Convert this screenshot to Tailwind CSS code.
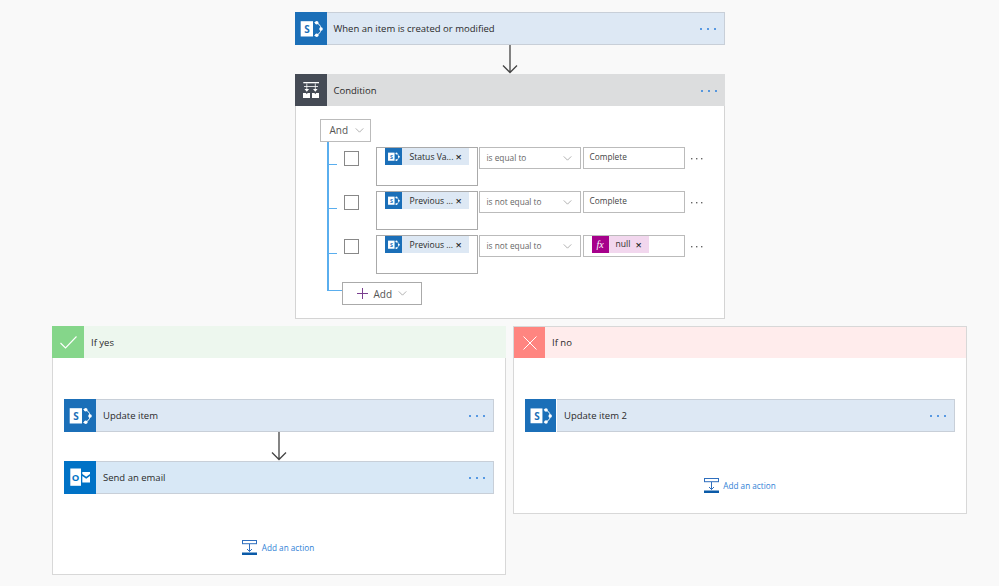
<!DOCTYPE html>
<html lang="en">
<head>
<meta charset="UTF-8">
<title>Flow designer</title>
<script src="https://cdn.jsdelivr.net/npm/@tailwindcss/browser@4"></script>
</head>
<body class="w-[999px] h-[586px] overflow-hidden bg-[#f9f9f9] text-[#2a2a2a] font-['Open_Sans','Noto_Sans',sans-serif] text-[9.5px] leading-none">

<!-- shared icons -->
<svg width="0" height="0" class="absolute">
  <symbol id="sp" viewBox="0 0 32 32">
    <path d="M19.5 10a6.5 6.5 0 0 1 0 13" fill="none" stroke="#fff" stroke-width="1"/>
    <circle cx="21.7" cy="10.2" r="1.8" fill="#fff"/>
    <circle cx="26" cy="16.5" r="1.8" fill="#fff"/>
    <circle cx="21.7" cy="22.8" r="1.8" fill="#fff"/>
    <rect x="5.7" y="8.7" width="12.3" height="15.3" fill="#fff"/>
  </symbol>
  <symbol id="outlook" viewBox="0 0 32 32">
    <rect x="6.3" y="7" width="10.7" height="17.3" fill="#fff"/>
    <path d="M18.3 10.5H26v2l-3.8 2.8-3.9-2.8zM18.3 14.6l3.9 2.7 3.8-2.7V21h-7.7z" fill="#fff"/>
  </symbol>
  <symbol id="add-action" viewBox="0 0 15 15">
    <rect x="0.5" y="0.5" width="14" height="3.2" fill="none" stroke="#2f6fbe"/>
    <path d="M7.5 4v7.5M5 9l2.5 2.5L10 9" fill="none" stroke="#2f6fbe"/>
    <rect x="0" y="12.5" width="15" height="2.5" fill="#0a5aa8"/>
  </symbol>
  <symbol id="chev" viewBox="0 0 10 6">
    <path d="M0.5 0.5L5 5l4.5-4.5" fill="none" stroke="#8a8a8a" stroke-width="0.8"/>
  </symbol>
  <symbol id="down-arrow" viewBox="0 0 16 29">
    <path d="M8 0v27.5M1 20.5l7 7 7-7" fill="none" stroke="#444" stroke-width="1.3"/>
  </symbol>
  <symbol id="dots" viewBox="0 0 16 2">
    <rect x="0" y="0" width="2" height="2" rx="1" fill="#2b7fdc"/>
    <rect x="7" y="0" width="2" height="2" rx="1" fill="#2b7fdc"/>
    <rect x="14" y="0" width="2" height="2" rx="1" fill="#2b7fdc"/>
  </symbol>
  <symbol id="dots-gray" viewBox="0 0 12 2">
    <rect x="0" y="0" width="1.4" height="1.4" fill="#666"/>
    <rect x="5" y="0" width="1.4" height="1.4" fill="#666"/>
    <rect x="10" y="0" width="1.4" height="1.4" fill="#666"/>
  </symbol>
</svg>

<div class="flex flex-col items-center pt-3 w-[1019px]">
  <!-- trigger -->
  <div class="w-[430px] h-[33px] flex items-center bg-[#dde8f4] border border-[#c8cfd8]">
    <div class="w-[32px] h-[33px] -ml-px shrink-0 bg-[#1b6fb8]">
      <svg class="w-[32px] h-[33px]" viewBox="0 0 32 33"><use href="#sp"/><text x="12" y="20.5" text-anchor="middle" font-weight="700" font-size="10" fill="#1b6fb8">S</text></svg>
    </div>
    <span class="ml-[7px] mt-px flex-1">When an item is created or modified</span>
    <svg class="w-[16px] h-[2px] mr-[8px] mt-px"><use href="#dots"/></svg>
  </div>
  <svg class="w-[16px] h-[29px] shrink-0"><use href="#down-arrow"/></svg>

  <!-- condition -->
  <div class="w-[430px] h-[245px] bg-white border border-[#d4d4d4] flex flex-col">
    <div class="h-[32px] -mx-px -mt-px flex items-center bg-[#dcddde] shrink-0">
      <div class="w-[32px] h-[32px] shrink-0 bg-[#454b55]">
        <svg class="w-[32px] h-[32px]" viewBox="0 0 32 32">
          <rect x="8.3" y="8" width="15.7" height="1.3" fill="#fff"/>
          <path d="M9 12.5h14M11.8 9.5v5.5M20.3 9.5v5.5" stroke="#fff" stroke-width="0.8" fill="none"/>
          <path d="M9.5 15h4.6l-2.3 2.7zM18 15h4.6l-2.3 2.7z" fill="#fff"/>
          <path d="M8 19h3l.8 1.2.8-1.2H15v5H8zM17 19h2.5l.8 1.2.8-1.2H24v5h-7z" fill="#fff"/>
        </svg>
      </div>
      <span class="ml-[7px] mt-px flex-1">Condition</span>
      <svg class="w-[16px] h-[2px] mr-[8px] mt-px"><use href="#dots"/></svg>
    </div>

    <div class="relative pl-[24px] pt-[13px]">
      <!-- tree connector -->
      <div class="absolute left-[31px] top-[36px] w-[15px] h-[149px] border-l-2 border-b border-[#5aaeee]"></div>
      <div class="absolute left-[32px] top-[58px] w-[9px] h-px bg-[#5aaeee]"></div>
      <div class="absolute left-[32px] top-[102px] w-[9px] h-px bg-[#5aaeee]"></div>
      <div class="absolute left-[32px] top-[147px] w-[9px] h-px bg-[#5aaeee]"></div>

      <div class="w-[51px] h-[23px] border border-[#bbb] flex items-center pl-[9px] pb-px gap-[7px] text-[10px] text-[#555]">
        And <svg class="w-[9px] h-[5px]"><use href="#chev"/></svg>
      </div>

      <div class="flex flex-col gap-[5px] mt-[5px] pl-[24px]">
        <div class="flex h-[39px]">
          <div class="w-[15px] h-[15px] mt-[4px] border border-[#888] shrink-0"></div>
          <div class="w-[102px] h-[39px] ml-[17px] border border-[#aaa] pl-[8px]">
            <div class="w-[84px] h-[17px] flex items-center bg-[#dde8f4]">
              <div class="w-[17px] h-[17px] bg-[#1b6fb8] shrink-0">
                <svg class="w-[17px] h-[17px]" viewBox="0 0 32 32"><use href="#sp"/><text x="12" y="20.5" text-anchor="middle" font-weight="700" font-size="10" fill="#1b6fb8">S</text></svg>
              </div>
              <span class="ml-[8px] mt-px w-[46px] text-[8.6px] whitespace-nowrap">Status Va...</span>
              <span class="text-[11px] font-semibold">×</span>
            </div>
          </div>
          <div class="w-[102px] h-[22px] ml-px border border-[#bbb] flex items-center justify-between pl-[7px] pr-[8px] text-[8.3px] text-[#666]">
            is equal to <svg class="w-[9px] h-[5px]"><use href="#chev"/></svg>
          </div>
          <div class="w-[102px] h-[22px] ml-[2px] border border-[#bbb] flex items-center pl-[6px] pb-[2px] text-[8.3px] text-[#444]">Complete</div>
          <svg class="w-[12px] h-[2px] ml-[6px] mt-[11px]"><use href="#dots-gray"/></svg>
        </div>

        <div class="flex h-[39px]">
          <div class="w-[15px] h-[15px] mt-[4px] border border-[#888] shrink-0"></div>
          <div class="w-[102px] h-[39px] ml-[17px] border border-[#aaa] pl-[8px]">
            <div class="w-[84px] h-[17px] flex items-center bg-[#dde8f4]">
              <div class="w-[17px] h-[17px] bg-[#1b6fb8] shrink-0">
                <svg class="w-[17px] h-[17px]" viewBox="0 0 32 32"><use href="#sp"/><text x="12" y="20.5" text-anchor="middle" font-weight="700" font-size="10" fill="#1b6fb8">S</text></svg>
              </div>
              <span class="ml-[8px] mt-px w-[46px] text-[8.6px] whitespace-nowrap">Previous ...</span>
              <span class="text-[11px] font-semibold">×</span>
            </div>
          </div>
          <div class="w-[102px] h-[22px] ml-px border border-[#bbb] flex items-center justify-between pl-[7px] pr-[8px] text-[8.3px] text-[#666]">
            is not equal to <svg class="w-[9px] h-[5px]"><use href="#chev"/></svg>
          </div>
          <div class="w-[102px] h-[22px] ml-[2px] border border-[#bbb] flex items-center pl-[6px] pb-[2px] text-[8.3px] text-[#444]">Complete</div>
          <svg class="w-[12px] h-[2px] ml-[6px] mt-[11px]"><use href="#dots-gray"/></svg>
        </div>

        <div class="flex h-[39px]">
          <div class="w-[15px] h-[15px] mt-[4px] border border-[#888] shrink-0"></div>
          <div class="w-[102px] h-[39px] ml-[17px] border border-[#aaa] pl-[8px]">
            <div class="w-[84px] h-[17px] flex items-center bg-[#dde8f4]">
              <div class="w-[17px] h-[17px] bg-[#1b6fb8] shrink-0">
                <svg class="w-[17px] h-[17px]" viewBox="0 0 32 32"><use href="#sp"/><text x="12" y="20.5" text-anchor="middle" font-weight="700" font-size="10" fill="#1b6fb8">S</text></svg>
              </div>
              <span class="ml-[8px] mt-px w-[46px] text-[8.6px] whitespace-nowrap">Previous ...</span>
              <span class="text-[11px] font-semibold">×</span>
            </div>
          </div>
          <div class="w-[102px] h-[22px] ml-px border border-[#bbb] flex items-center justify-between pl-[7px] pr-[8px] text-[8.3px] text-[#666]">
            is not equal to <svg class="w-[9px] h-[5px]"><use href="#chev"/></svg>
          </div>
          <div class="w-[102px] h-[22px] ml-[2px] border border-[#bbb] pl-[8px]">
            <div class="w-[57px] h-[17px] flex items-center bg-[#f2d7ee] text-[8.6px]">
              <div class="w-[17px] h-[17px] bg-[#a6008b] text-white flex items-center justify-center font-['Liberation_Serif',serif] italic text-[10px] shrink-0">fx</div>
              <span class="ml-[7px] w-[15px]">null</span>
              <span class="text-[11px] font-semibold ml-[5px]">×</span>
            </div>
          </div>
          <svg class="w-[12px] h-[2px] ml-[6px] mt-[11px]"><use href="#dots-gray"/></svg>
        </div>
      </div>

      <div class="w-[80px] h-[23px] ml-[22px] mt-[8px] relative bg-white border border-[#aaa] flex items-center pl-[14px] gap-[6px] text-[10px] text-[#555]">
        <svg class="w-[11px] h-[11px]" viewBox="0 0 11 11"><path d="M5.5 0v11M0 5.5h11" stroke="#7a3f8f" fill="none"/></svg>
        <span>Add</span>
        <svg class="w-[9px] h-[5px]"><use href="#chev"/></svg>
      </div>
    </div>
  </div>
</div>

<!-- branches -->
<div class="flex items-start gap-[7px] pl-[52px] mt-[7px]">
  <div class="w-[454px] h-[249px] bg-white border border-[#d8d8d8] shrink-0 flex flex-col">
    <div class="h-[32px] -mx-px -mt-px flex items-center bg-[#edf7ee] shrink-0">
      <div class="w-[32px] h-[32px] bg-[#85d68a] flex items-center justify-center">
        <svg class="w-[17px] h-[13px]" viewBox="0 0 17 13"><path d="M0.5 7l5 5L16.5 0.5" fill="none" stroke="#fff" stroke-width="1.1"/></svg>
      </div>
      <span class="ml-[7px] mt-px">If yes</span>
    </div>
    <div class="px-[11px] pt-[41px] flex flex-col items-center">
      <div class="w-[430px] h-[33px] flex items-center bg-[#dde8f4] border border-[#c8cfd8]">
        <div class="w-[32px] h-[33px] -ml-px shrink-0 bg-[#1b6fb8]">
          <svg class="w-[32px] h-[33px]" viewBox="0 0 32 33"><use href="#sp"/><text x="12" y="20.5" text-anchor="middle" font-weight="700" font-size="10" fill="#1b6fb8">S</text></svg>
        </div>
        <span class="ml-[7px] mt-px flex-1">Update item</span>
        <svg class="w-[16px] h-[2px] mr-[8px] mt-px"><use href="#dots"/></svg>
      </div>
      <svg class="w-[16px] h-[29px] shrink-0"><use href="#down-arrow"/></svg>
      <div class="w-[430px] h-[33px] flex items-center bg-[#d8e8f6] border border-[#c8cfd8]">
        <div class="w-[32px] h-[33px] -ml-px shrink-0 bg-[#0072c6]">
          <svg class="w-[32px] h-[33px]" viewBox="0 0 32 33"><use href="#outlook"/><text x="11.6" y="20" text-anchor="middle" font-weight="700" font-size="9.5" fill="#0072c6">O</text></svg>
        </div>
        <span class="ml-[7px] mt-px flex-1">Send an email</span>
        <svg class="w-[16px] h-[2px] mr-[8px] mt-px"><use href="#dots"/></svg>
      </div>
      <div class="flex items-center gap-[5px] mt-[46px] -ml-[2px] text-[8.2px] text-[#2f7fd6]">
        <svg class="w-[15px] h-[15px]"><use href="#add-action"/></svg>
        <span class="mt-px">Add an action</span>
      </div>
    </div>
  </div>

  <div class="w-[454px] h-[188px] bg-white border border-[#d8d8d8] shrink-0 flex flex-col">
    <div class="h-[31px] flex items-center bg-[#ffecec] shrink-0">
      <div class="w-[31px] h-[31px] bg-[#ff8580] flex items-center justify-center">
        <svg class="w-[14px] h-[14px]" viewBox="0 0 14 14"><path d="M0.5 0.5l13 13M13.5 0.5l-13 13" fill="none" stroke="#fff" stroke-width="1"/></svg>
      </div>
      <span class="ml-[7px] mt-px">If no</span>
    </div>
    <div class="px-[11px] pt-[41px] flex flex-col items-center">
      <div class="w-[430px] h-[33px] flex items-center bg-[#dde8f4] border border-[#c8cfd8]">
        <div class="w-[32px] h-[33px] -ml-px shrink-0 bg-[#1b6fb8] border-r border-white">
          <svg class="w-[31px] h-[33px]" viewBox="0 0 31 33"><use href="#sp"/><text x="12" y="20.5" text-anchor="middle" font-weight="700" font-size="10" fill="#1b6fb8">S</text></svg>
        </div>
        <span class="ml-[7px] mt-px flex-1">Update item 2</span>
        <svg class="w-[16px] h-[2px] mr-[8px] mt-px"><use href="#dots"/></svg>
      </div>
      <div class="flex items-center gap-[4px] mt-[46px] text-[8.2px] text-[#2f7fd6]">
        <svg class="w-[15px] h-[15px]"><use href="#add-action"/></svg>
        <span class="mt-px">Add an action</span>
      </div>
    </div>
  </div>
</div>
</body>
</html>
